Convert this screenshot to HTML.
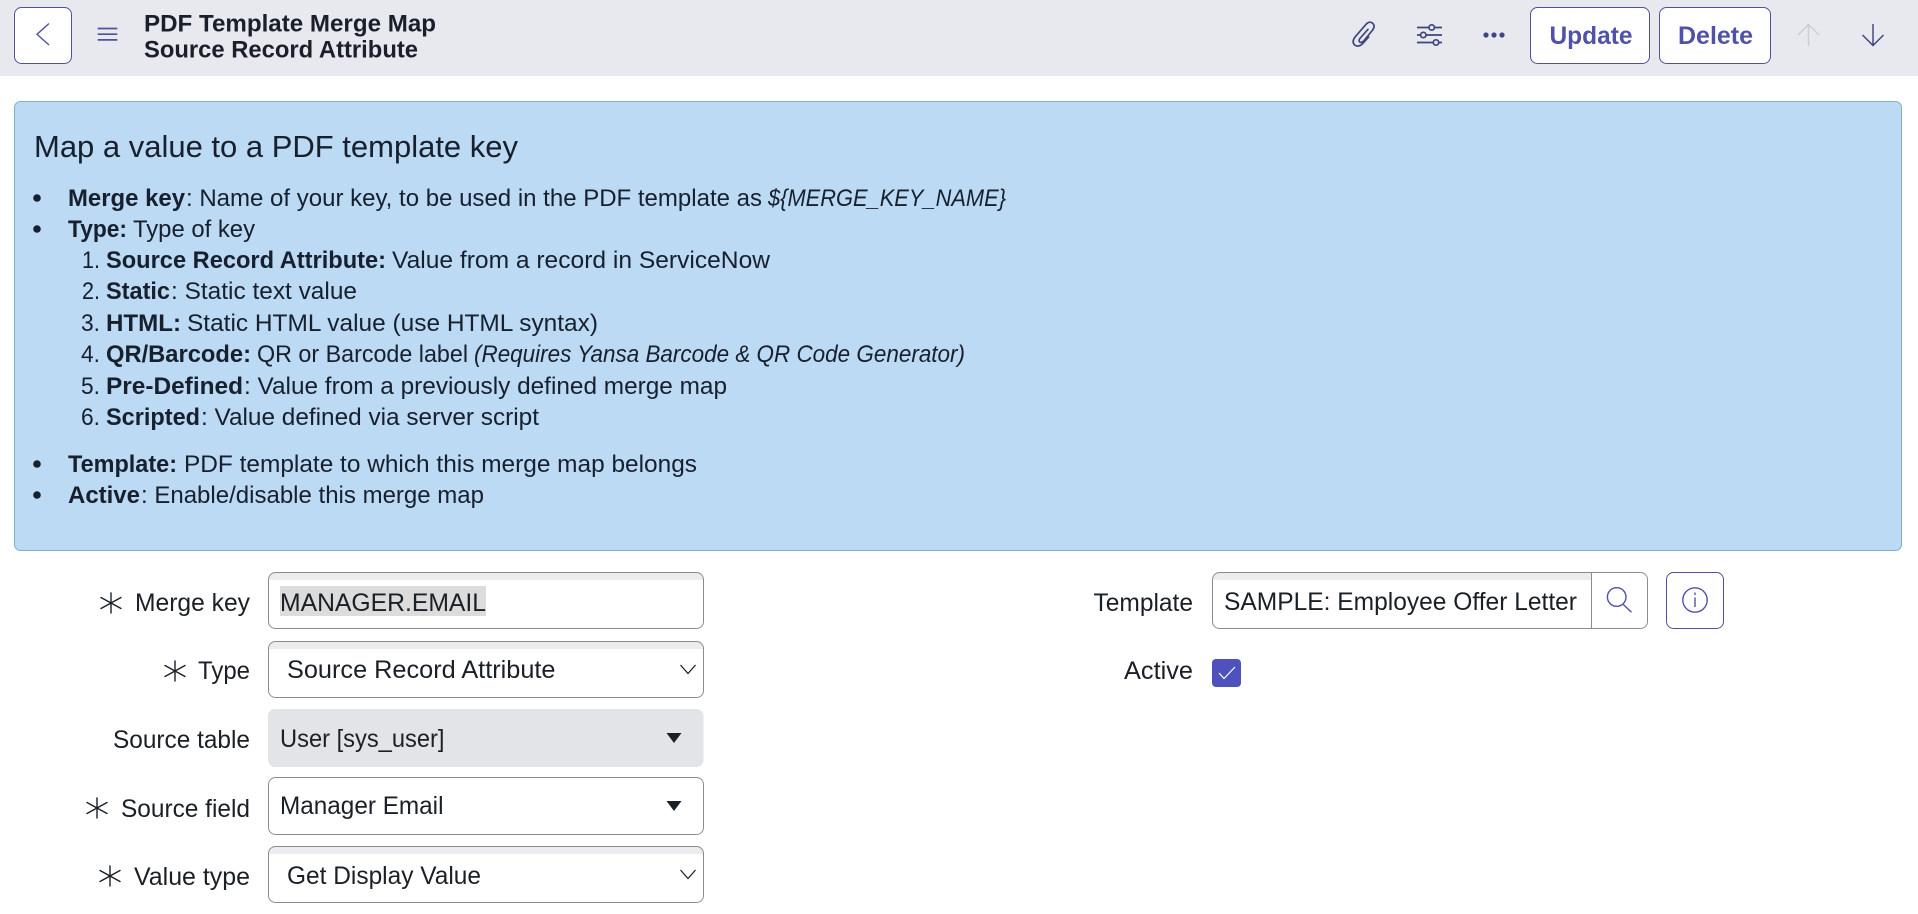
<!DOCTYPE html>
<html lang="en">
<head>
<meta charset="utf-8">
<title>PDF Template Merge Map</title>
<style>
html,body{margin:0;padding:0;background:#fff;width:1918px;height:914px;overflow:hidden}
svg{display:block}
text{font-family:"Liberation Sans",sans-serif;fill:#16202e}
.b{font-size:24px}
.bd{font-size:24px;font-weight:700}
.i{font-size:24px;font-style:italic}
.f{font-size:25px;fill:#1b1f26}
.t{font-size:24.5px;font-weight:700;fill:#1a1f2b}
.btn{font-size:25px;font-weight:700;fill:#4f52a8}
</style>
</head>
<body>
<svg width="1918" height="914" viewBox="0 0 1918 914" xmlns="http://www.w3.org/2000/svg">
<defs>
<g id="ast" fill="none" stroke="#1b1f26" stroke-width="1.400" stroke-linecap="round">
<path d="M0-10V10M-10-5.500L10 5.500M-10 5.500L10-5.500"/>
</g>
</defs>

<!-- Header -->
<rect x="0" y="0" width="1918" height="76" fill="#e8e9ee"/>
<rect x="14.500" y="7.500" width="57" height="56" rx="7" fill="#fff" stroke="#4f5296" stroke-width="1"/>
<path d="M49 23.500L37 34.300 49 45" fill="none" stroke="#4f52a8" stroke-width="1.400"/>
<path d="M97.700 28.500H117.300M97.700 34.200H117.300M97.700 39.900H117.300" fill="none" stroke="#4f5296" stroke-width="1.700"/>
<text class="t" x="144" y="31.500" textLength="292" lengthAdjust="spacingAndGlyphs">PDF Template Merge Map</text>
<text class="t" x="144" y="57.500" textLength="274" lengthAdjust="spacingAndGlyphs">Source Record Attribute</text>

<!-- Paperclip -->
<g transform="translate(1340 10) scale(.33333)">
<path d="M84 58L60 85Q54 94 61 97Q66 98 71 93L98 60Q107 47 97 39Q88 33 79 42L46 80Q34 95 44 105Q55 113 68 101L86 81" fill="none" stroke="#3f4380" stroke-width="5" stroke-linecap="round"/>
</g>
<!-- Sliders -->
<g fill="#e8e9ee" stroke="#3f4380" stroke-width="1.700">
<path d="M1417 27.500H1442M1417 35H1442M1417 42.500H1442" fill="none"/>
<circle cx="1431.700" cy="27.500" r="2.700"/>
<circle cx="1423.300" cy="35" r="2.700"/>
<circle cx="1436" cy="42.500" r="2.700"/>
</g>
<g fill="#3f4380"><circle cx="1486" cy="35" r="2.600"/><circle cx="1494" cy="35" r="2.600"/><circle cx="1502" cy="35" r="2.600"/></g>

<rect x="1530.500" y="7.500" width="119" height="56" rx="7" fill="#fff" stroke="#4f5296"/>
<text class="btn" x="1549.500" y="44" textLength="83" lengthAdjust="spacingAndGlyphs">Update</text>
<rect x="1659.500" y="7.500" width="111" height="56" rx="7" fill="#fff" stroke="#4f5296"/>
<text class="btn" x="1678" y="44" textLength="75" lengthAdjust="spacingAndGlyphs">Delete</text>
<path d="M1808.500 46V24.500M1798 35L1808.500 24.500 1819 35" fill="none" stroke="#c9cbd6" stroke-width="1.400"/>
<path d="M1873 24V45.500M1862.500 35L1873 45.500 1883.500 35" fill="none" stroke="#3a3f80" stroke-width="1.400"/>

<!-- Info box -->
<rect x="14.500" y="101.500" width="1887" height="449" rx="6" fill="#bcdaf3" stroke="#7fb0cc"/>
<text x="34" y="157" font-size="31" textLength="484" lengthAdjust="spacingAndGlyphs">Map a value to a PDF template key</text>

<g fill="#16202e">
<circle cx="37" cy="198" r="3.800"/><circle cx="37" cy="229" r="3.800"/><circle cx="37" cy="464" r="3.800"/><circle cx="37" cy="495" r="3.800"/>
</g>

<text class="bd" x="68" y="206" textLength="117" lengthAdjust="spacingAndGlyphs">Merge key</text>
<text class="b" x="186" y="206" textLength="576" lengthAdjust="spacingAndGlyphs">: Name of your key, to be used in the PDF template as</text>
<text class="i" x="768" y="206" textLength="238" lengthAdjust="spacingAndGlyphs">${MERGE_KEY_NAME}</text>

<text class="bd" x="68" y="237" textLength="59" lengthAdjust="spacingAndGlyphs">Type:</text>
<text class="b" x="133" y="237" textLength="122" lengthAdjust="spacingAndGlyphs">Type of key</text>

<text class="b" x="82" y="268" textLength="18" lengthAdjust="spacingAndGlyphs">1.</text>
<text class="bd" x="106" y="268" textLength="280" lengthAdjust="spacingAndGlyphs">Source Record Attribute:</text>
<text class="b" x="392" y="268" textLength="378" lengthAdjust="spacingAndGlyphs">Value from a record in ServiceNow</text>

<text class="b" x="82" y="299" textLength="18" lengthAdjust="spacingAndGlyphs">2.</text>
<text class="bd" x="106" y="299" textLength="64" lengthAdjust="spacingAndGlyphs">Static</text>
<text class="b" x="171" y="299" textLength="186" lengthAdjust="spacingAndGlyphs">: Static text value</text>

<text class="b" x="81" y="331" textLength="19" lengthAdjust="spacingAndGlyphs">3.</text>
<text class="bd" x="106" y="331" textLength="75" lengthAdjust="spacingAndGlyphs">HTML:</text>
<text class="b" x="187" y="331" textLength="411" lengthAdjust="spacingAndGlyphs">Static HTML value (use HTML syntax)</text>

<text class="b" x="81" y="362" textLength="19" lengthAdjust="spacingAndGlyphs">4.</text>
<text class="bd" x="106" y="362" textLength="145" lengthAdjust="spacingAndGlyphs">QR/Barcode:</text>
<text class="b" x="257" y="362" textLength="211" lengthAdjust="spacingAndGlyphs">QR or Barcode label</text>
<text class="i" x="474" y="362" textLength="491" lengthAdjust="spacingAndGlyphs">(Requires Yansa Barcode &amp; QR Code Generator)</text>

<text class="b" x="81" y="394" textLength="19" lengthAdjust="spacingAndGlyphs">5.</text>
<text class="bd" x="106" y="394" textLength="137" lengthAdjust="spacingAndGlyphs">Pre-Defined</text>
<text class="b" x="244" y="394" textLength="483" lengthAdjust="spacingAndGlyphs">: Value from a previously defined merge map</text>

<text class="b" x="81" y="425" textLength="19" lengthAdjust="spacingAndGlyphs">6.</text>
<text class="bd" x="106" y="425" textLength="94" lengthAdjust="spacingAndGlyphs">Scripted</text>
<text class="b" x="201" y="425" textLength="338" lengthAdjust="spacingAndGlyphs">: Value defined via server script</text>

<text class="bd" x="68" y="472" textLength="109" lengthAdjust="spacingAndGlyphs">Template:</text>
<text class="b" x="184" y="472" textLength="513" lengthAdjust="spacingAndGlyphs">PDF template to which this merge map belongs</text>

<text class="bd" x="68" y="503" textLength="72" lengthAdjust="spacingAndGlyphs">Active</text>
<text class="b" x="141" y="503" textLength="343" lengthAdjust="spacingAndGlyphs">: Enable/disable this merge map</text>

<!-- Left form labels -->
<use href="#ast" x="111" y="603"/>
<text class="f" x="135" y="611" textLength="115" lengthAdjust="spacingAndGlyphs">Merge key</text>
<use href="#ast" x="175" y="671"/>
<text class="f" x="198" y="679" textLength="52" lengthAdjust="spacingAndGlyphs">Type</text>
<text class="f" x="113" y="748" textLength="137" lengthAdjust="spacingAndGlyphs">Source table</text>
<use href="#ast" x="97" y="808"/>
<text class="f" x="121" y="817" textLength="129" lengthAdjust="spacingAndGlyphs">Source field</text>
<use href="#ast" x="110" y="876"/>
<text class="f" x="134" y="885" textLength="116" lengthAdjust="spacingAndGlyphs">Value type</text>

<!-- Merge key input -->
<rect x="268.500" y="572.500" width="435" height="56" rx="7" fill="#fff"/>
<path d="M269 579.500a7 7 0 0 1 7-7H696a7 7 0 0 1 7 7v.5H269Z" fill="#ececee"/>
<rect x="268.500" y="572.500" width="435" height="56" rx="7" fill="none" stroke="#8a8c90"/>
<rect x="280" y="586" width="206" height="30" fill="#dcdcdc"/>
<text class="f" x="280" y="611" textLength="206" lengthAdjust="spacingAndGlyphs">MANAGER.EMAIL</text>

<!-- Type select -->
<rect x="268.500" y="641.500" width="435" height="56" rx="7" fill="#fff"/>
<path d="M269 648.500a7 7 0 0 1 7-7H696a7 7 0 0 1 7 7v.5H269Z" fill="#ececee"/>
<rect x="268.500" y="641.500" width="435" height="56" rx="7" fill="none" stroke="#8a8c90"/>
<text class="f" x="287" y="678" textLength="268.500" lengthAdjust="spacingAndGlyphs">Source Record Attribute</text>
<path d="M680.500 665L688 673.500 695.500 665" fill="none" stroke="#22262e" stroke-width="1.300"/>

<!-- Source table -->
<rect x="268" y="709" width="435.500" height="58" rx="7" fill="#e3e4e8"/>
<text class="f" x="280" y="747" textLength="164.500" lengthAdjust="spacingAndGlyphs">User [sys_user]</text>
<path d="M666.500 733H681.500L674 743Z" fill="#1b1f26"/>

<!-- Source field -->
<rect x="268.500" y="777.500" width="435" height="57" rx="7" fill="#fff" stroke="#8a8c90"/>
<text class="f" x="280" y="814" textLength="163.500" lengthAdjust="spacingAndGlyphs">Manager Email</text>
<path d="M666.500 801H681.500L674 811Z" fill="#1b1f26"/>

<!-- Value type -->
<rect x="268.500" y="846.500" width="435" height="56" rx="7" fill="#fff"/>
<path d="M269 853.500a7 7 0 0 1 7-7H696a7 7 0 0 1 7 7v.5H269Z" fill="#ececee"/>
<rect x="268.500" y="846.500" width="435" height="56" rx="7" fill="none" stroke="#8a8c90"/>
<text class="f" x="287" y="884" textLength="194" lengthAdjust="spacingAndGlyphs">Get Display Value</text>
<path d="M680.500 870L688 878.500 695.500 870" fill="none" stroke="#22262e" stroke-width="1.300"/>

<!-- Right form -->
<text class="f" x="1093.500" y="611" textLength="99.500" lengthAdjust="spacingAndGlyphs">Template</text>
<rect x="1212.500" y="572.500" width="435" height="56" rx="7" fill="#fff"/>
<path d="M1213 579.500a7 7 0 0 1 7-7H1591v7.500H1213Z" fill="#ececee"/>
<rect x="1212.500" y="572.500" width="435" height="56" rx="7" fill="none" stroke="#8a8c90"/>
<path d="M1591.500 573V628" stroke="#8a8c90"/>
<text class="f" x="1224" y="610" textLength="353" lengthAdjust="spacingAndGlyphs">SAMPLE: Employee Offer Letter</text>
<circle cx="1616.700" cy="597" r="9.300" fill="none" stroke="#4f52a8" stroke-width="1.400"/>
<path d="M1623.300 604.500L1631.500 612.300" fill="none" stroke="#4f52a8" stroke-width="1.400"/>
<rect x="1666.500" y="572.500" width="57" height="56" rx="7" fill="#fff" stroke="#4f5296"/>
<circle cx="1695" cy="600" r="12.200" fill="none" stroke="#4f52a8" stroke-width="1.400"/>
<path d="M1695 597.500V607M1695 592.500V595" fill="none" stroke="#4f52a8" stroke-width="1.400"/>

<text class="f" x="1124" y="679" textLength="69" lengthAdjust="spacingAndGlyphs">Active</text>
<rect x="1212" y="659" width="29" height="28" rx="4" fill="#4f52bd"/>
<path d="M1219 673L1224 678.500 1235 667" fill="none" stroke="#fff" stroke-width="1.200"/>
</svg>
</body>
</html>
